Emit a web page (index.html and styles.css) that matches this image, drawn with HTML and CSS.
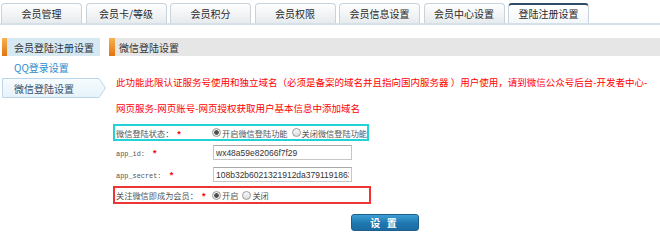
FILE: index.html
```html
<!DOCTYPE html>
<html lang="zh-CN">
<head>
  <meta charset="UTF-8"/>
  <title>登陆注册设置</title>
  <link rel="stylesheet" href="styles.css">
</head>
<body>
  <ul class="tabs">
    <li class="tab">会员管理</li>
    <li class="tab">会员卡/等级</li>
    <li class="tab">会员积分</li>
    <li class="tab">会员权限</li>
    <li class="tab">会员信息设置</li>
    <li class="tab">会员中心设置</li>
    <li class="tab tab-active">登陆注册设置</li>
  </ul>
  <div class="main">
    <div class="side">
      <div class="side-title">会员登陆注册设置</div>
      <a class="side-link" href="#">QQ登录设置</a>
      <a class="side-link side-current" href="#">
        <svg class="side-arrow" width="104" height="20" viewBox="0 0 104 20">
          <defs>
            <linearGradient id="curbg" x1="0" y1="0" x2="0" y2="1">
              <stop offset="0" stop-color="#f6fbfe"/>
              <stop offset="1" stop-color="#e6f2fa"/>
            </linearGradient>
          </defs>
          <polygon points="0.5,0.5 97,0.5 103.5,10 97,19.5 0.5,19.5" fill="url(#curbg)" stroke="#bcd6e9"/>
        </svg>
        <span>微信登陆设置</span>
      </a>
    </div>
    <div class="content">
      <div class="content-title">微信登陆设置</div>
      <p class="notice">此功能此限认证服务号使用和独立域名（必须是备案的域名并且指向国内服务器 ）用户使用，请到微信公众号后台-开发者中心-<br>网页服务-网页账号-网页授权获取用户基本信息中添加域名</p>
      <div class="fields">
        <div class="field mark-cyan">
          <span class="field-label">微信登陆状态：<i class="req">*</i></span>
          <label class="opt"><input type="radio" name="wxlogin" checked>开启微信登陆功能</label>
          <label class="opt"><input type="radio" name="wxlogin">关闭微信登陆功能</label>
        </div>
        <div class="field field-input">
          <span class="field-label mono">app_id: <i class="req">*</i></span>
          <input class="text" type="text" value="wx48a59e82066f7f29">
        </div>
        <div class="field field-input">
          <span class="field-label mono">app_secret: <i class="req">*</i></span>
          <input class="text" type="text" value="108b32b6021321912da37911918632f4">
        </div>
        <div class="field mark-red">
          <span class="field-label">关注微信即成为会员：<i class="req">*</i></span>
          <label class="opt"><input type="radio" name="follow" checked>开启</label>
          <label class="opt"><input type="radio" name="follow">关闭</label>
        </div>
      </div>
      <div class="actions">
        <button class="btn" type="button">设 置</button>
      </div>
    </div>
  </div>
</body>
</html>
```
FILE: styles.css
```css
body {
  margin: 0;
  background: #fff;
  font-family: "Noto Sans CJK SC", "Liberation Sans", sans-serif;
  color: #333;
}
.tabs {
  display: flex;
  list-style: none;
  margin: 0;
  padding: 3px 0 0 1px;
  border-bottom: 2px solid #d5e0e8;
}
.tab {
  box-sizing: border-box;
  width: 81px;
  height: 20px;
  margin-right: 3.5px;
  border: 1px solid #c9d3db;
  border-bottom: none;
  border-radius: 4px 4px 0 0;
  background: linear-gradient(#fefefe, #e7ebee);
  text-align: center;
  font-size: 10px;
  line-height: 19px;
  color: #2a2a2a;
}
.tab-active {
  border-top: 2px solid #2f4c68;
  background: linear-gradient(#ffffff, #f4f7f9);
  line-height: 18px;
}
.main {
  display: flex;
  margin-top: 13px;
  padding-left: 2px;
}
.side {
  width: 98px;
  flex-shrink: 0;
}
.side-title {
  display: flex;
  align-items: center;
  height: 18px;
  background: #d6e9f3;
  font-size: 10px;
  color: #333;
}
.side-title::before,
.content-title::before {
  content: "";
  align-self: stretch;
  width: 5px;
  margin-right: 7px;
  background: linear-gradient(#f8b250, #e27410);
}
.side-link {
  display: flex;
  align-items: center;
  height: 22px;
  padding-left: 12px;
  font-size: 10px;
  color: #2d8ccd;
  text-decoration: none;
}
.side-current {
  position: relative;
  height: 20px;
  color: #35506a;
}
.side-arrow {
  position: absolute;
  left: 0;
  top: 0;
}
.side-current span {
  position: relative;
}
.content {
  flex: 1;
  margin-left: 9px;
}
.content-title {
  display: flex;
  align-items: center;
  height: 18px;
  background: #e6e6e6;
  font-size: 10px;
  color: #333;
}
.content-title::before {
  width: 6px;
  margin-right: 4px;
}
.notice {
  margin: 13px 0 3px;
  padding-left: 7px;
  font-size: 9.5px;
  line-height: 26px;
  color: #ff0000;
  white-space: nowrap;
}
.fields {
  display: flex;
  flex-direction: column;
  gap: 1px;
  margin-left: 4px;
}
.field {
  box-sizing: border-box;
  display: flex;
  align-items: center;
  width: 256px;
  height: 17px;
  border: 2px solid transparent;
  font-size: 8.2px;
  color: #555;
}
.field-input {
  height: 21px;
}
.mark-cyan {
  border-color: #22d2d6;
}
.mark-red {
  width: 258px;
  height: 18px;
  border-color: #ee3535;
}
.field-label {
  width: 97px;
  flex-shrink: 0;
  padding-left: 1px;
  box-sizing: border-box;
  white-space: nowrap;
}
.mono {
  font-family: "Liberation Mono", monospace;
  font-size: 6.9px;
}
.req {
  font-style: normal;
  font-family: "Liberation Sans", sans-serif;
  font-weight: bold;
  font-size: 9px;
  color: #f00;
  margin-left: 4px;
}
.opt {
  display: flex;
  align-items: center;
  margin-right: 4px;
  white-space: nowrap;
}
.opt input {
  appearance: none;
  box-sizing: border-box;
  width: 9px;
  height: 9px;
  margin: 0 1px 0 0;
  border: 1px solid #9c9c9c;
  border-radius: 50%;
  background: linear-gradient(#fafafa, #dcdcdc);
}
.opt input:checked {
  background: radial-gradient(circle, #505050 0 2px, #f2f2f2 2.6px, #dadada);
}
.text {
  box-sizing: border-box;
  width: 139px;
  height: 15px;
  margin: 0 0 0 1px;
  padding: 0 2px;
  border: 1px solid #c6c6c6;
  border-top-color: #a9a9a9;
  font-family: "Liberation Sans", sans-serif;
  font-size: 8.5px;
  color: #333;
}
.actions {
  display: flex;
  justify-content: center;
  margin-top: 10px;
}
.btn {
  width: 68px;
  height: 17px;
  padding: 0;
  border: 1px solid #1d5e8c;
  border-radius: 3px;
  background: linear-gradient(#3c9fd4, #1f77ae 55%, #1a6ca3);
  color: #fff;
  font-family: "Noto Sans CJK SC", sans-serif;
  font-size: 10px;
  font-weight: bold;
  letter-spacing: 2px;
}
```
